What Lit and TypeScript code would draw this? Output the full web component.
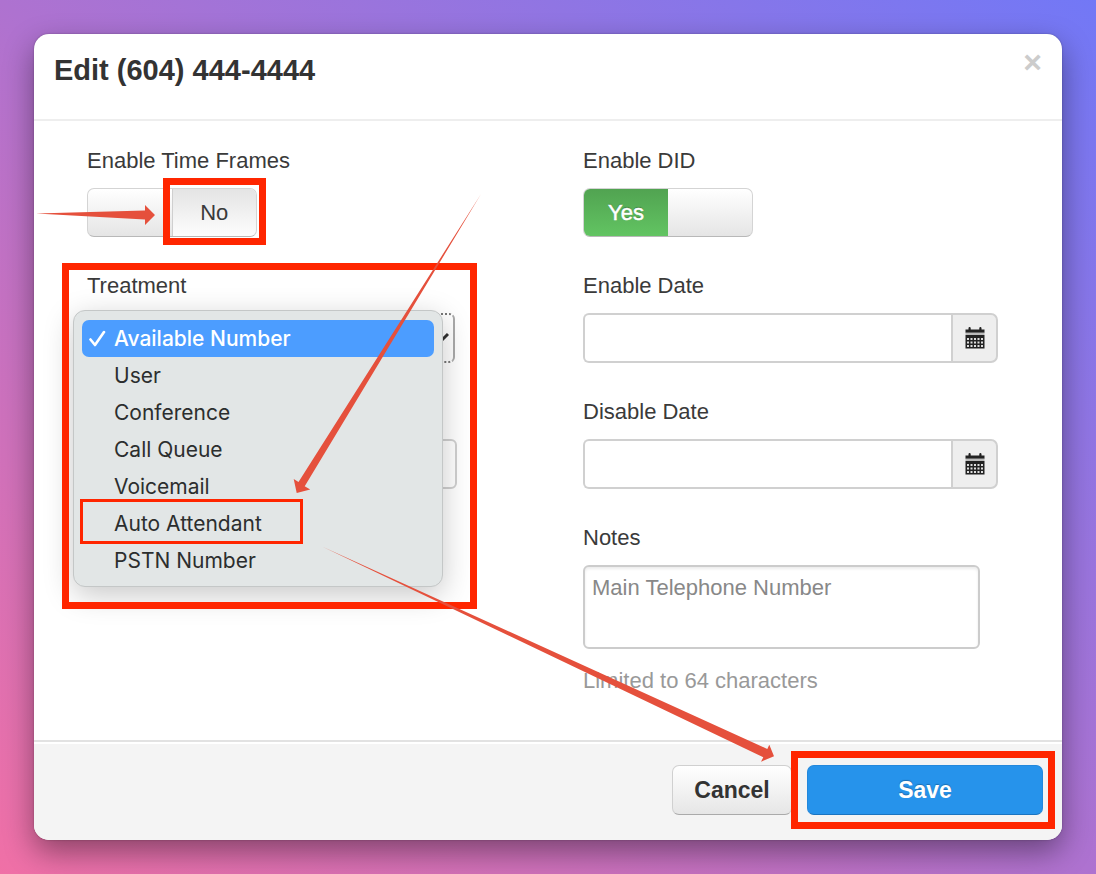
import { LitElement, html, css, svg, nothing } from "lit";
import { customElement, property, state } from "lit/decorators.js";
import { classMap } from "lit/directives/class-map.js";

const TREATMENTS = [
  "Available Number",
  "User",
  "Conference",
  "Call Queue",
  "Voicemail",
  "Auto Attendant",
  "PSTN Number",
];

const FLAGGED = "Auto Attendant";

/** Two-position Yes / No switch. */
@customElement("yes-no-switch")
export class YesNoSwitch extends LitElement {
  @property({ type: Boolean }) on = false;
  @property({ type: Boolean }) flagged = false;
  @property() label = "";

  static styles = css`
    :host {
      display: block;
    }
    .label {
      display: block;
      margin-bottom: 12px;
      line-height: 30px;
    }
    .switch {
      position: relative;
      box-sizing: border-box;
      display: flex;
      width: 170px;
      height: 49px;
      border: 1px solid #d4d4d4;
      border-bottom-color: #b8b8b8;
      border-radius: 7px;
      background: linear-gradient(#ffffff, #e5e5e5);
      font-size: 22px;
    }
    .half {
      flex: 1;
      display: flex;
      align-items: center;
      justify-content: center;
      position: relative;
    }
    .yes {
      color: #fff;
      background: linear-gradient(#51a351, #62c462);
      border-radius: 6px 0 0 6px;
      text-shadow: 0 -1px 1px rgba(0, 0, 0, 0.3);
      -webkit-text-stroke: 0.5px #fff;
    }
    .no {
      background: linear-gradient(#e4e4e4, #fdfdfd);
      border-left: 1px solid #cfcfcf;
      border-radius: 0 6px 6px 0;
    }
    .flag {
      position: absolute;
      inset: -11px -10px -9px;
      border: 7px solid #ff2600;
      pointer-events: none;
    }
    .input {
      position: absolute;
      inset: 0;
      width: 100%;
      height: 100%;
      margin: 0;
      opacity: 0;
      cursor: pointer;
    }
  `;

  render() {
    return html`
      <label class="label" for="toggle">${this.label}</label>
      <div class="switch">
        <span class=${classMap({ half: true, yes: this.on })}>${this.on ? "Yes" : nothing}</span>
        <span class=${classMap({ half: true, no: !this.on })}>
          ${this.on ? nothing : "No"}
          ${this.flagged ? html`<span class="flag"></span>` : nothing}
        </span>
        <input
          class="input"
          id="toggle"
          type="checkbox"
          .checked=${this.on}
          @change=${(e: Event) => (this.on = (e.target as HTMLInputElement).checked)}
        />
      </div>
    `;
  }
}

/** Text box with a calendar button joined to its right end. */
@customElement("date-field")
export class DateField extends LitElement {
  @property() label = "";

  static styles = css`
    :host {
      display: block;
    }
    .label {
      display: block;
      margin-bottom: 12px;
      line-height: 30px;
    }
    .group {
      display: flex;
      height: 50px;
    }
    .input {
      flex: 1;
      min-width: 0;
      box-sizing: border-box;
      padding: 0 8px;
      border: 2px solid #d0d0d0;
      border-right: 0;
      border-radius: 6px 0 0 6px;
      background: #fff;
      font: inherit;
      color: #555;
    }
    .calendar {
      box-sizing: border-box;
      width: 47px;
      padding: 0;
      display: flex;
      align-items: center;
      justify-content: center;
      border: 2px solid #d0d0d0;
      border-radius: 0 7px 7px 0;
      background: #eee;
    }
  `;

  render() {
    const columns = [2, 5.5, 9, 12.5, 16];
    const rows = [11, 14.5, 18];
    return html`
      <label class="label" for="date">${this.label}</label>
      <div class="group">
        <input class="input" id="date" type="text" />
        <button class="calendar" type="button" aria-label="Open calendar">
          <svg width="20" height="22" viewBox="0 0 20 22">
            <path
              fill="#222"
              d="M.5 2.5h3V1.200a1 1 0 0 1 2.200 0v1.300h8.600V1.200a1 1 0 0 1 2.200 0v1.300h3v3.300H.5zM.5 8h19v13.500H.5z"
            />
            <path fill="#bbb" d="M.5 5.800h19V8H.5z" />
            ${columns.map((x) =>
              rows.map((y) => svg`<rect x=${x} y=${y} width="2" height="2" fill="#ddd" />`)
            )}
          </svg>
        </button>
      </div>
    `;
  }
}

@customElement("app-root")
export class AppRoot extends LitElement {
  @state() private treatment = TREATMENTS[0];

  static styles = css`
    :host {
      position: relative;
      box-sizing: border-box;
      display: flex;
      min-height: 100vh;
      padding: 34px;
      overflow: hidden;
      background: linear-gradient(to top right, #f070a6, #ae72d0 50%, #7278f6);
      font-family: "Liberation Sans", Arial, sans-serif;
      font-size: 22px;
      color: #3a3a3a;
    }
    .dialog {
      flex: 1;
      min-width: 0;
      display: flex;
      flex-direction: column;
      border-radius: 15px;
      background: #fff;
      box-shadow: 0 12px 30px rgba(0, 0, 0, 0.4), 0 0 2px rgba(0, 0, 0, 0.3);
    }
    .header {
      display: flex;
      justify-content: space-between;
      align-items: flex-start;
      padding: 20px 20px 33px;
      border-bottom: 2px solid #eee;
    }
    .title {
      margin: 0;
      font-size: 29px;
      line-height: 32px;
      color: #333;
    }
    .close {
      padding: 0;
      border: 0;
      background: none;
      font: bold 32px/16px "Liberation Sans", Arial, sans-serif;
      color: #ccc;
    }
    .body {
      flex: 1;
      display: grid;
      grid-template-columns: 1fr 1fr;
      gap: 81px;
      padding: 25px 64px 44px 53px;
    }
    .column {
      display: flex;
      flex-direction: column;
      gap: 34px;
      min-width: 0;
    }
    .label {
      display: block;
      margin-bottom: 12px;
      line-height: 30px;
    }
    .treatment {
      position: relative;
    }
    .select-wrap {
      position: relative;
      width: 368px;
    }
    .select {
      appearance: none;
      box-sizing: border-box;
      display: block;
      width: 100%;
      height: 50px;
      padding: 0 8px;
      border: 2px solid #aaa;
      border-top: 2px dotted #777;
      border-bottom: 2px dotted #777;
      border-radius: 6px;
      background: #fff;
      font: inherit;
      color: #555;
    }
    .chevron {
      position: absolute;
      right: 6px;
      top: 18px;
      pointer-events: none;
    }
    .number {
      box-sizing: border-box;
      display: block;
      width: 370px;
      height: 50px;
      margin-top: 76px;
      padding: 0 8px;
      border: 2px solid #d0d0d0;
      border-radius: 6px;
      background: #fff;
      font: inherit;
    }
    .menu {
      position: absolute;
      top: 39px;
      left: -14px;
      box-sizing: border-box;
      width: 370px;
      padding: 9px 8px 7px;
      border: 1px solid #c4c7c7;
      border-radius: 12px;
      background: #e2e6e6;
      box-shadow: 0 8px 30px rgba(0, 0, 0, 0.22);
      font-family: Inter, "Noto Sans", sans-serif;
      font-size: 21px;
      color: #2c2e2e;
    }
    .option {
      position: relative;
      display: flex;
      align-items: center;
      width: 100%;
      height: 37px;
      padding: 0 0 0 32px;
      border: 0;
      border-radius: 7px;
      background: none;
      font: inherit;
      color: inherit;
      text-align: left;
    }
    .selected {
      background: #4c9dff;
      color: #fff;
      font-weight: 500;
    }
    .tick {
      position: absolute;
      left: 7px;
      top: 10px;
    }
    .flag {
      position: absolute;
      border: 7px solid #ff2600;
      pointer-events: none;
    }
    .flag-treatment {
      top: -8px;
      left: -25px;
      box-sizing: border-box;
      width: 415px;
      height: 346px;
    }
    .flag-option {
      inset: -6px auto -2px -2px;
      width: 217px;
      border-width: 3px;
    }
    .flag-save {
      inset: -15px -13px -15px -17px;
    }
    .notes {
      box-sizing: border-box;
      display: block;
      width: 397px;
      max-width: 100%;
      height: 84px;
      padding: 6px 7px;
      border: 2px solid #ccc;
      border-radius: 6px;
      box-shadow: inset 0 2px 3px rgba(0, 0, 0, 0.08);
      resize: none;
      font: inherit;
      line-height: 30px;
      color: #888;
    }
    .help {
      margin: 17px 0 0;
      line-height: 30px;
      color: #999;
    }
    .footer {
      display: flex;
      justify-content: flex-end;
      gap: 15px;
      padding: 23px 19px 25px;
      border-top: 2px solid #e2e2e2;
      border-radius: 0 0 15px 15px;
      background: #f4f4f4;
      box-shadow: inset 0 2px 0 #fff;
    }
    .button {
      position: relative;
      box-sizing: border-box;
      height: 50px;
      padding: 0;
      border: 1px solid #d0d0d0;
      border-bottom-color: #aaa;
      border-radius: 7px;
      font: bold 23px "Liberation Sans", Arial, sans-serif;
    }
    .cancel {
      width: 120px;
      background: linear-gradient(#ffffff, #e6e6e6);
      color: #333;
    }
    .save {
      width: 236px;
      border-color: #2388dc;
      border-bottom-color: #1b74c0;
      background: #2693eb;
      color: #fff;
      text-shadow: 0 -1px 1px rgba(0, 0, 0, 0.25);
    }
    .arrows {
      position: absolute;
      top: 0;
      left: 0;
      fill: #e5503c;
      pointer-events: none;
    }
  `;

  private renderOption(name: string) {
    const selected = name === this.treatment;
    return html`
      <button
        class=${classMap({ option: true, selected })}
        type="button"
        role="option"
        aria-selected=${selected}
        @click=${() => (this.treatment = name)}
      >
        ${selected
          ? html`<svg class="tick" width="17" height="17" viewBox="0 0 17 17">
              <path
                d="M1.5 9.5 6 15 15 2"
                fill="none"
                stroke="#fff"
                stroke-width="2.6"
                stroke-linecap="round"
                stroke-linejoin="round"
              />
            </svg>`
          : nothing}
        ${name}
        ${name === FLAGGED ? html`<span class="flag flag-option"></span>` : nothing}
      </button>
    `;
  }

  render() {
    return html`
      <section class="dialog" role="dialog" aria-labelledby="title">
        <header class="header">
          <h1 class="title" id="title">Edit (604) 444-4444</h1>
          <button class="close" type="button" aria-label="Close">×</button>
        </header>

        <div class="body">
          <div class="column">
            <yes-no-switch label="Enable Time Frames" flagged></yes-no-switch>
            <div class="treatment">
              <label class="label" for="treatment">Treatment</label>
              <div class="select-wrap">
                <select
                  class="select"
                  id="treatment"
                  .value=${this.treatment}
                  @change=${(e: Event) => (this.treatment = (e.target as HTMLSelectElement).value)}
                >
                  ${TREATMENTS.map((name) => html`<option>${name}</option>`)}
                </select>
                <svg class="chevron" width="14" height="12" viewBox="0 0 14 12">
                  <path d="M1 3l6 6 6-6" fill="none" stroke="#333" stroke-width="3" />
                </svg>
              </div>
              <input class="number" type="text" aria-label="Number" />
              <div class="menu" role="listbox" aria-label="Treatment">
                ${TREATMENTS.map((name) => this.renderOption(name))}
              </div>
              <span class="flag flag-treatment"></span>
            </div>
          </div>

          <div class="column">
            <yes-no-switch label="Enable DID" on></yes-no-switch>
            <date-field label="Enable Date"></date-field>
            <date-field label="Disable Date"></date-field>
            <div>
              <label class="label" for="notes">Notes</label>
              <textarea class="notes" id="notes" maxlength="64" .value=${"Main Telephone Number"}></textarea>
              <p class="help">Limited to 64 characters</p>
            </div>
          </div>
        </div>

        <footer class="footer">
          <button class="button cancel" type="button">Cancel</button>
          <button class="button save" type="button">Save<span class="flag flag-save"></span></button>
        </footer>
      </section>

      <svg class="arrows" width="1096" height="874" viewBox="0 0 1096 874" aria-hidden="true">
        <path d="M36 213.5 145 210.5V205l10 10-10 10v-5.500z" />
        <path d="M481 194 298.500 482l-4.800-3 3 14 13.500-3.500-5.500-3.200z" />
        <path d="M322 546.500 767.300 749l2-4.300 4.700 11.600-13 5.400 2.300-4.400z" />
      </svg>
    `;
  }
}
